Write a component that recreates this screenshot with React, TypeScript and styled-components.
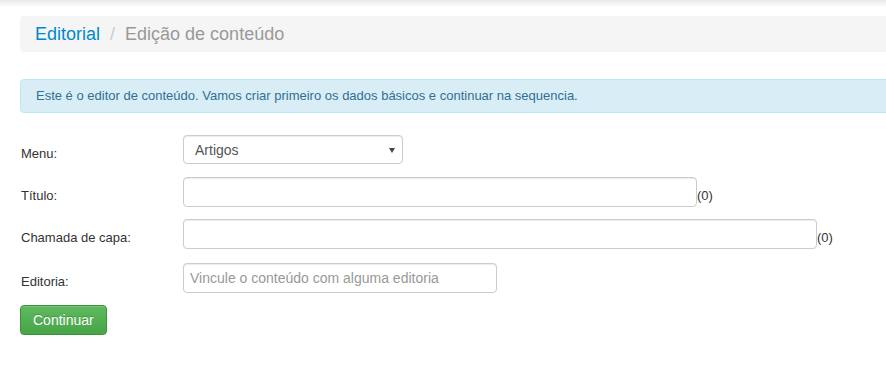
import styled, { createGlobalStyle } from 'styled-components'

const GlobalStyle = createGlobalStyle`
  html, body {
    margin: 0;
    padding: 0;
    background: #fff;
    overflow-x: hidden;
  }
  body {
    font-family: "Liberation Sans", Arial, sans-serif;
    font-size: 13px;
    color: #333;
  }
`

interface Field {
  label: string
  width?: number
  placeholder?: string
  counter?: boolean
  gap: number
}

const fields: Field[] = [
  { label: 'Título:', width: 514, counter: true, gap: 12 },
  { label: 'Chamada de capa:', width: 634, counter: true, gap: 14 },
  { label: 'Editoria:', width: 314, placeholder: 'Vincule o conteúdo com alguma editoria', gap: 12 },
]

const App: React.FC = () => {
  return (
    <>
      <GlobalStyle />
      <TopShadow />
      <Page>
        <Breadcrumb>
          <Crumb href="#">Editorial</Crumb>
          <Divider>/</Divider>
          <Current>Edição de conteúdo</Current>
        </Breadcrumb>

        <Alert>Este é o editor de conteúdo. Vamos criar primeiro os dados básicos e continuar na sequencia.</Alert>

        <Form>
          <Row $gap={13}>
            <Label>Menu:</Label>
            <SelectWrap>
              <Select defaultValue="artigos">
                <option value="artigos">Artigos</option>
              </Select>
            </SelectWrap>
          </Row>
          {fields.map((f) => (
            <Row key={f.label} $gap={f.gap}>
              <Label>{f.label}</Label>
              <Input $width={f.width} placeholder={f.placeholder} />
              {f.counter && <Counter>(0)</Counter>}
            </Row>
          ))}
          <Button type="button">Continuar</Button>
        </Form>
      </Page>
    </>
  )
}

const TopShadow = styled.div`
  height: 7px;
  background: linear-gradient(to bottom, rgba(0, 0, 0, 0.09), rgba(0, 0, 0, 0));
  margin-bottom: 9px;
`

const Page = styled.div`
  padding-left: 20px;
`

const Breadcrumb = styled.nav`
  display: flex;
  align-items: center;
  height: 36px;
  padding: 0 15px;
  margin-right: -10px;
  background: #f5f5f5;
  border-radius: 4px;
  font-size: 18px;
  line-height: 20px;
`

const Crumb = styled.a`
  color: #0088cc;
  text-decoration: none;
`

const Divider = styled.span`
  color: #ccc;
  padding: 0 10px;
`

const Current = styled.span`
  color: #999;
`

const Alert = styled.div`
  margin-top: 27px;
  margin-right: -10px;
  padding: 9px 15px;
  line-height: 14px;
  background: #d9edf7;
  border: 1px solid #bce8f1;
  border-radius: 4px;
  color: #31708f;
`

const Form = styled.form`
  margin-top: 22px;
  display: flex;
  flex-direction: column;
  align-items: flex-start;
`

const Row = styled.div<{ $gap: number }>`
  display: flex;
  align-items: center;
  margin-bottom: ${(p) => p.$gap}px;
`

const Label = styled.label`
  width: 163px;
  padding-top: 7px;
  padding-left: 1px;
  box-sizing: border-box;
`

const SelectWrap = styled.div`
  position: relative;
  width: 220px;

  &::after {
    content: '';
    position: absolute;
    right: 8px;
    top: 13px;
    border-left: 3px solid transparent;
    border-right: 3px solid transparent;
    border-top: 5px solid #444;
    pointer-events: none;
  }
`

const Select = styled.select`
  appearance: none;
  width: 100%;
  height: 29px;
  padding: 0 11px;
  font-family: "Liberation Sans", Arial, sans-serif;
  font-size: 14px;
  color: #555;
  background: #fff;
  border: 1px solid #ccc;
  border-radius: 4px;
  box-sizing: border-box;
  box-shadow: inset 0 1px 1px rgba(0, 0, 0, 0.075);
`

const Input = styled.input<{ $width?: number }>`
  width: ${(p) => p.$width ?? 300}px;
  height: 30px;
  padding: 0 6px;
  font-family: "Liberation Sans", Arial, sans-serif;
  font-size: 14px;
  color: #555;
  border: 1px solid #ccc;
  border-radius: 4px;
  box-sizing: border-box;
  box-shadow: inset 0 1px 1px rgba(0, 0, 0, 0.075);
  outline: none;

  &::placeholder {
    color: #999;
  }
`

const Counter = styled.span`
  padding-top: 7px;
  color: #333;
`

const Button = styled.button`
  height: 30px;
  padding: 0 12px;
  font-family: "Liberation Sans", Arial, sans-serif;
  font-size: 14px;
  color: #fff;
  background: linear-gradient(to bottom, #5fba5f 0%, #47a447 100%);
  border: 1px solid #3e8f3e;
  border-radius: 4px;
  text-shadow: 0 -1px 0 rgba(0, 0, 0, 0.2);
  box-shadow: inset 0 1px 0 rgba(255, 255, 255, 0.15), 0 1px 1px rgba(0, 0, 0, 0.075);
  cursor: pointer;
`

export default App
